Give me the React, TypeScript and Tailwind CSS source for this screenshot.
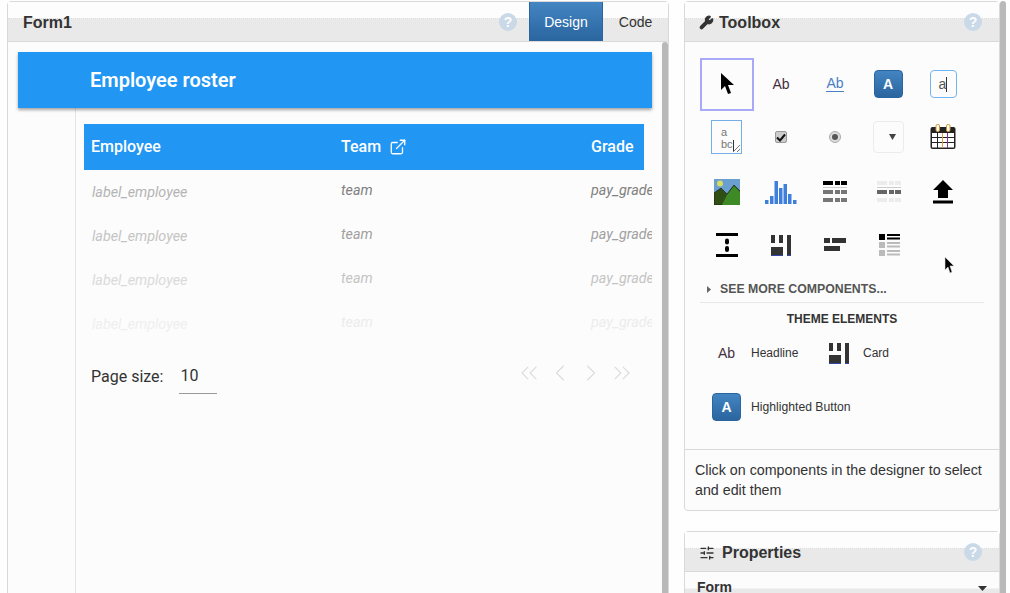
import { ExternalLink, Wrench, SlidersHorizontal, ChevronsLeft, ChevronLeft, ChevronRight, ChevronsRight } from 'lucide-react';
import type { ReactNode } from 'react';

const rows = [
  { tone: 'text-[#b4b4b4]', team: 'text-[#808080]' },
  { tone: 'text-[#c4c4c4]', team: 'text-[#a0a0a0]' },
  { tone: 'text-[#dadada]', team: 'text-[#c4c4c4]' },
  { tone: 'text-[#efefef]', team: 'text-[#ececec]' },
];

function Help() {
  return (
    <span className="w-[18px] h-[18px] mt-px rounded-full bg-[#c9d9e8] text-[#fdfdfd] text-[14px] font-bold leading-[18px] text-center">
      ?
    </span>
  );
}

function PanelHead({ children }: { children: ReactNode }) {
  return (
    <div className="relative h-[40px] shrink-0 flex items-center border-b border-[#d9d9d9] bg-[linear-gradient(#fdfdfd_16px,#e9e9e9_17px)]">
      <div className="absolute top-[16px] inset-x-0 border-t border-dotted border-[#dcdcdc]" />
      <div className="relative flex items-center w-full h-full">{children}</div>
    </div>
  );
}

function Blue() {
  return (
    <span className="w-[29px] h-[28px] flex items-center justify-center rounded-[4px] border border-[#2a659f] bg-[linear-gradient(#4385c2,#2a659f)] text-white font-['Liberation_Sans',sans-serif] font-bold text-[14px]">
      A
    </span>
  );
}

function CardIcon() {
  return (
    <svg width="21" height="21" viewBox="0 0 21 21">
      <rect x="0" y="0" width="4" height="8" fill="#333" />
      <rect x="8" y="0" width="4" height="8" fill="#333" />
      <rect x="16" y="0" width="4" height="20" fill="#333" />
      <rect x="0" y="12" width="12" height="8" fill="#333" />
      <rect x="0" y="20" width="12" height="1" fill="#3344aa" />
      <rect x="16" y="20" width="4" height="1" fill="#3344aa" />
    </svg>
  );
}

function GridIcon({ head, body, foot }: { head: string; body: string; foot: string }) {
  const row = (y: number, c: string) => (
    <g fill={c}>
      <rect x="0" y={y} width="10" height="4" />
      <rect x="12" y={y} width="5" height="4" />
      <rect x="18" y={y} width="6" height="4" />
    </g>
  );
  return (
    <svg width="24" height="22" viewBox="0 0 24 22">
      {row(0, head)}
      <rect x="0" y="6" width="24" height="1" fill="#ccc" />
      {row(9, body)}
      {row(17, foot)}
    </svg>
  );
}

const tools: ReactNode[] = [
  <span className="w-[54px] h-[53px] border-2 border-[#a9a9fb] flex items-center justify-center" key="pointer">
    <svg width="14" height="22" viewBox="0 0 14 22">
      <path d="M1 0v17l4-4 3 8 3-1-3-8h6z" fill="#000" />
    </svg>
  </span>,
  <span className="text-[14px] text-[#44303c]" key="label">Ab</span>,
  <span className="text-[14px] text-[#4a7fc4] border-b border-[#4a7fc4] leading-[15px]" key="link">Ab</span>,
  <span className="mr-[2px]" key="button"><Blue /></span>,
  <span className="w-[27px] h-[28px] rounded-[4px] border border-[#74b5f0] text-[14px] text-[#555] flex items-center justify-center" key="textbox">
    a<span className="w-px h-[15px] bg-[#333]" />
  </span>,
  <span className="relative w-[31px] h-[34px] mr-[1px] border border-[#74aee4] text-[11px] leading-[12px] text-[#777] pt-[5px] pl-[9px]" key="textarea">
    a
    <br />
    bc<span className="inline-block w-px h-[11px] bg-[#333] align-middle" />
    <svg className="absolute right-0 bottom-0" width="9" height="9" viewBox="0 0 9 9">
      <path d="M1 8l7-7M5 8l3-3" stroke="#777" strokeWidth="1" />
    </svg>
  </span>,
  <span className="w-3 h-3 rounded-[2px] bg-[#ccc] border border-[#999] flex items-center justify-center" key="check">
    <svg width="10" height="9" viewBox="0 0 10 9">
      <path d="M1 4.500l3 3 5-6" stroke="#111" strokeWidth="2" fill="none" />
    </svg>
  </span>,
  <span className="w-3 h-3 rounded-full bg-[#ddd] border border-[#aaa] flex items-center justify-center" key="radio">
    <span className="w-[6px] h-[6px] rounded-full bg-[#555]" />
  </span>,
  <span className="w-[31px] h-[32px] mr-[2px] rounded-[4px] border border-[#ececec] flex items-center justify-end pr-[7px]" key="select">
    <svg width="7" height="6" viewBox="0 0 7 6">
      <path d="M0 0h7L3.500 6z" fill="#444" />
    </svg>
  </span>,
  <svg width="26" height="26" viewBox="0 0 26 26" key="calendar">
    <rect x="0.5" y="3" width="25" height="22" rx="2" fill="#222" />
    <rect x="2" y="9" width="22" height="14.5" fill="#fff" />
    <g fill="#222">
      <rect x="2" y="13" width="22" height="1" />
      <rect x="2" y="18" width="22" height="1" />
      <rect x="7" y="9" width="1" height="15" />
    </g>
    <rect x="12" y="9" width="1" height="15" fill="#e0a040" />
    <rect x="17" y="9" width="1" height="15" fill="#8a2c9a" />
    <rect x="6" y="0.5" width="3.5" height="7" rx="1.5" fill="#fff" stroke="#d09030" />
    <rect x="16.5" y="0.5" width="3.5" height="7" rx="1.5" fill="#fff" stroke="#d09030" />
  </svg>,
  <svg width="26" height="26" viewBox="0 0 26 26" key="image">
    <rect width="26" height="26" fill="#6a9fd0" />
    <circle cx="6" cy="4.500" r="3" fill="#d8dc60" />
    <path d="M0 14l7-5 6 6 7-9 6 6v14H0z" fill="#2f4f14" stroke="#111" strokeWidth="0.6" />
    <path d="M8 26l5-10 7-9 6 6v13z" fill="#3e8a26" />
  </svg>,
  <svg width="32" height="24" viewBox="0 0 32 24" key="chart">
    <g fill="#3f7fdc">
      <rect x="0" y="20" width="3.5" height="4" />
      <rect x="5" y="16" width="3.5" height="8" />
      <rect x="9.500" y="1" width="3.5" height="23" />
      <rect x="14" y="8" width="3.5" height="16" />
      <rect x="18.500" y="4" width="3.5" height="20" />
      <rect x="23" y="14" width="3.5" height="10" />
      <rect x="28" y="20" width="3.5" height="4" />
    </g>
  </svg>,
  <GridIcon head="#000" body="#777" foot="#777" key="grid" />,
  <GridIcon head="#ececec" body="#666" foot="#ececec" key="gridrow" />,
  <svg width="20" height="24" viewBox="0 0 20 24" key="upload">
    <path d="M10 0l10 10h-5v8H5v-8H0z" fill="#000" />
    <rect y="20.500" width="20" height="3" fill="#000" />
  </svg>,
  <svg width="22" height="24" viewBox="0 0 22 24" key="spacer">
    <rect width="22" height="3" y="0" fill="#000" />
    <rect width="22" height="3" y="21" fill="#000" />
    <rect x="9" y="5.500" width="4" height="6" rx="2" fill="#000" />
    <rect x="9" y="13" width="4" height="6" rx="2" fill="#000" />
  </svg>,
  <CardIcon key="card" />,
  <svg width="22" height="14" viewBox="0 0 22 14" key="flow">
    <g fill="#333">
      <rect x="0" y="0" width="6" height="5" />
      <rect x="8" y="0" width="14" height="5" />
      <rect x="0" y="8" width="16" height="5" />
    </g>
  </svg>,
  <svg width="21" height="22" viewBox="0 0 21 22" key="list">
    <rect width="6" height="6" fill="#000" />
    <rect y="8" width="6" height="6" fill="#bbb" />
    <rect y="16" width="6" height="6" fill="#bbb" />
    <g fill="#000">
      <rect x="8" y="0" width="13" height="2" />
      <rect x="8" y="3.500" width="13" height="2" />
    </g>
    <g fill="#bbb">
      <rect x="8" y="8" width="13" height="2" />
      <rect x="8" y="11.500" width="13" height="2" />
      <rect x="8" y="16" width="13" height="2" />
      <rect x="8" y="19.500" width="13" height="2" />
    </g>
  </svg>,
];

export default function App() {
  return (
    <div className="relative h-[593px] w-[1010px] overflow-hidden bg-[#fefefe] flex pl-[7px] pt-px font-['Liberation_Sans',sans-serif] text-[#333]">
      {/* designer */}
      <div className="w-[662px] h-[640px] shrink-0 rounded-t-[4px] border border-[#d9d9d9] bg-[#fcfcfc] flex flex-col">
        <PanelHead>
          <span className="ml-[15px] pt-[2px] text-[16px] font-bold text-[#333]">Form1</span>
          <span className="ml-auto mr-[12px] flex">
            <Help />
          </span>
          <span className="w-[74px] h-full pt-px flex items-center justify-center text-white text-[14px] bg-[linear-gradient(#4385c2,#2a659f)] border-x border-[#2a659f]">
            Design
          </span>
          <span className="w-[65px] pt-px text-center text-[14px] text-[#333]">Code</span>
        </PanelHead>
        <div className="flex-1 flex min-h-0">
          <div className="flex-1 min-w-0 pt-[10px] px-[10px] font-['Roboto',sans-serif]">
            <div className="h-[56px] bg-[#2196f3] shadow-[0_2px_3px_rgba(0,0,0,0.35)] flex items-center pl-[72px] text-white text-[20px] font-semibold relative">
              Employee roster
            </div>
            <div className="ml-[57px] border-l border-[#e4e4e4] h-[500px] pl-2 pt-4 overflow-hidden">
              <div className="w-[560px] h-[46px] bg-[#2196f3] flex items-center text-white text-[16px] font-medium">
                <span className="w-[257px] pl-[7px]">Employee</span>
                <span className="w-[250px] flex items-center gap-[8px]">
                  Team <ExternalLink size={18} strokeWidth={1.75} />
                </span>
                <span>Grade</span>
              </div>
              {rows.map((r, i) => (
                <div key={i} className="w-[568px] h-[44px] flex overflow-hidden italic text-[14.3px]">
                  <span className={`w-[257px] shrink-0 pl-[8px] pt-[12px] ${r.tone}`}>label_employee</span>
                  <span className={`w-[250px] shrink-0 pt-[10px] ${r.team}`}>team</span>
                  <span className={`shrink-0 pt-[10px] whitespace-nowrap ${r.team}`}>pay_grade</span>
                </div>
              ))}
              <div className="flex items-center w-[560px] mt-[9px] h-[44px] text-[16px] text-[#333]">
                <span className="ml-[7px] mr-[16px]">Page size:</span>
                <span className="w-[38px] h-[36px] -mt-[2px] border-b border-[#999] pl-[1px] leading-[36px]">10</span>
                <span className="ml-auto mr-[8px] mb-[8px] flex gap-[3px] text-[#dcdcdc]">
                  <ChevronsLeft size={28} strokeWidth={1} />
                  <ChevronLeft size={28} strokeWidth={1} />
                  <ChevronRight size={28} strokeWidth={1} />
                  <ChevronsRight size={28} strokeWidth={1} />
                </span>
              </div>
            </div>
          </div>
          <div className="w-[6px] bg-[#b9b9b9] rounded-t-[3px] shrink-0" />
        </div>
      </div>

      {/* right column */}
      <div className="w-[316px] ml-[15px] shrink-0 flex flex-col">
        <div className="h-[510px] shrink-0 rounded-[4px] border border-[#d9d9d9] bg-[#fcfcfc] flex flex-col">
          <PanelHead>
            <span className="ml-[14px] pt-[2px] flex items-center gap-[5px] text-[16px] font-bold text-[#333]">
              <Wrench size={15} fill="#333" strokeWidth={2} />
              Toolbox
            </span>
            <span className="ml-auto mr-[17px] flex">
              <Help />
            </span>
          </PanelHead>
          <div className="flex-1 flex flex-col">
            <div className="grid grid-cols-[repeat(5,54px)] auto-rows-[54px] mt-[15px] ml-[15px]">
              {tools.map((t, i) => (
                <div key={i} className={`flex items-center justify-center ${i % 10 >= 5 ? 'pb-[2px]' : ''}`}>
                  {t}
                </div>
              ))}
            </div>
            <div className="mx-[15px] mt-[7px] h-[23px] border-b border-[#e8e8e8] flex items-start gap-[9px] pl-[7px] text-[12.3px] font-bold text-[#555]">
              <svg className="mt-[6px]" width="4" height="7" viewBox="0 0 4 7">
                <path d="M0 0l4 3.500L0 7z" fill="#666" />
              </svg>
              SEE MORE COMPONENTS...
            </div>
            <div className="text-center text-[12px] font-bold text-[#333] mt-[7px] h-[20px]">THEME ELEMENTS</div>
            <div className="flex items-center h-[40px] mt-[3px] text-[12px] text-[#333]">
              <span className="w-[66px] pl-[33px] text-[14px] text-[#44303c]">Ab</span>
              <span className="w-[78px]">Headline</span>
              <CardIcon />
              <span className="ml-[13px]">Card</span>
            </div>
            <div className="flex items-center h-[30px] mt-[19px] text-[12.2px] text-[#333]">
              <span className="ml-[27px] mr-[10px]">
                <Blue />
              </span>
              Highlighted Button
            </div>
            <div className="mt-auto h-[61px] border-t border-[#d9d9d9] px-[10px] pt-[10px] text-[14.25px] leading-[20px] text-[#333]">
              Click on components in the designer to select and edit them
            </div>
          </div>
        </div>
        <div className="mt-[20px] h-[100px] shrink-0 rounded-t-[4px] border border-[#d9d9d9] bg-[#fcfcfc]">
          <PanelHead>
            <span className="ml-[14px] pt-[2px] flex items-center gap-[7px] text-[16px] font-bold text-[#333]">
              <SlidersHorizontal size={16} />
              Properties
            </span>
            <span className="ml-auto mr-[17px] flex">
              <Help />
            </span>
          </PanelHead>
          <div className="h-[40px] flex items-start justify-between px-[12px] pt-[5px] text-[14px] font-bold text-[#333] bg-[linear-gradient(#fcfcfc_16px,#e9e9e9_17px)]">
            Form
            <svg className="mt-[9px]" width="9" height="5" viewBox="0 0 9 5">
              <path d="M0 0h9L4.500 5z" fill="#333" />
            </svg>
          </div>
        </div>
      </div>
      <div className="w-[6px] h-[593px] shrink-0 bg-[#b9b9b9] rounded-t-[3px]" />

      {/* pointer in the recording */}
      <svg className="absolute left-[944px] top-[256px]" width="12" height="19" viewBox="0 0 12 19">
        <path d="M1 1v13l3-3 2 6 2-1-2-6h4z" fill="#000" stroke="#ddd" strokeWidth="0.6" />
      </svg>
    </div>
  );
}
